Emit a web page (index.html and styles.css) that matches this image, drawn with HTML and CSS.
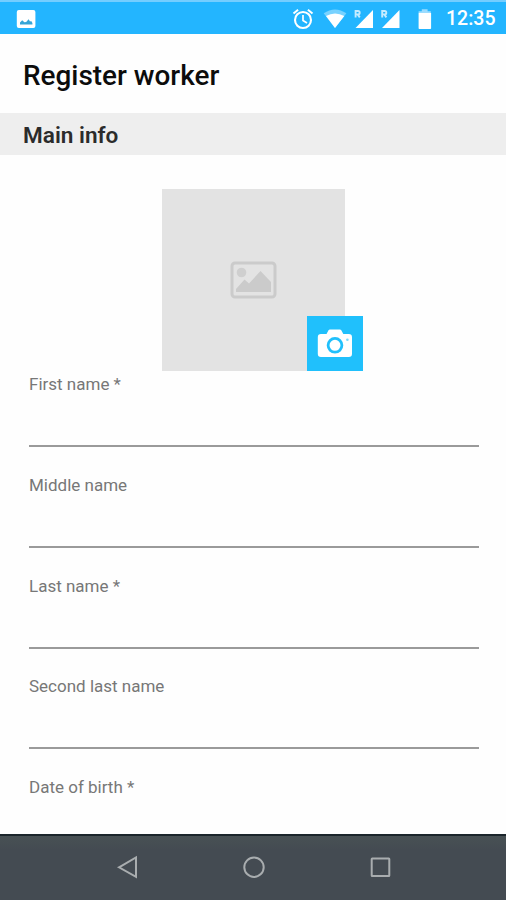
FILE: index.html
```html
<!DOCTYPE html>
<html lang="en">
<head>
<meta charset="utf-8">
<title>Register worker</title>
<link rel="stylesheet" href="styles.css">
</head>
<body>
<div class="screen">
  <header class="status">
    <svg class="status-photo" width="20" height="20" viewBox="16 8 20 20"><rect x="16.8" y="9" width="18.6" height="18" rx="2" fill="#fff"/><path d="M20 23.4v-1.8l2.2-2.4 2.2 2 1.800-.2 2.400-2.800 1.400 2.200 1.200-.4 1.200 2v1.400z" fill="#35a5d8"/></svg>
    <div class="status-icons">
      <svg width="22" height="22" viewBox="292 7 22 22" fill="none" stroke="#fff"><circle cx="303" cy="19" r="8" stroke-width="2.1"/><path d="M303 14v5.5l4 2.4" stroke-width="1.7"/><path d="M293.5 12.5l4.6-3.8M312.5 12.5l-4.6-3.8" stroke-width="2"/></svg>
      <svg width="24" height="22" viewBox="323 7 24 22"><path d="M323.7 12.3Q335 4.500 346.400 12.300L335 27z" fill="#78d2ff"/><path d="M326 15Q335 9.800 344.300 15L335 27z" fill="#fff"/></svg>
      <svg width="21" height="22" viewBox="353 7 21 22"><path d="M373 9v18h-17.500z" fill="#fff"/><path d="M355.600 16.500V10h2.400a1.700 1.700 0 0 1 0 3.400h-2.400m2 0l2.200 3" fill="none" stroke="#c4ebff" stroke-width="1.900"/></svg>
      <svg width="21" height="22" viewBox="380 7 21 22"><path d="M399.500 9v18h-17.500z" fill="#fff"/><path d="M382.200 16.500V10h2.400a1.700 1.700 0 0 1 0 3.400h-2.400m2 0l2.200 3" fill="none" stroke="#c4ebff" stroke-width="1.900"/></svg>
      <svg width="14" height="22" viewBox="418 7 14 22"><path d="M418.600 12V10.300h3.200V8.300h5.800v2h3.200V12z" fill="#9bdcff"/><path d="M418.600 12h12.500v15.200q0 .8-.8.800h-10.900q-.8 0-.8-.8z" fill="#fff"/></svg>
    </div>
    <span class="clock">12:35</span>
  </header>
  <h1 class="title">Register worker</h1>
  <h2 class="section">Main info</h2>
  <main class="form">
    <div class="photo">
      <svg width="48" height="40" viewBox="230 260 48 40"><rect x="232" y="263" width="43" height="34" rx="3" fill="none" stroke="#cbcbcb" stroke-width="3"/><circle cx="241.500" cy="272.500" r="4.800" fill="#cfcfcf"/><path d="M236 292v-3l8.500-9.500 4.500 4L260.500 271l10.500 11v10z" fill="#cbcbcb"/></svg>
      <button class="camera" aria-label="Take photo">
        <svg width="36" height="30" viewBox="317 329 36 30"><path d="M321 334h5.500l2-3.700q.5-.8 1.400-.8h10q.9 0 1.400.8l2 3.700h5.500q3.200 0 3.200 3.200v16.600q0 3.200-3.200 3.200h-27.800q-3.200 0-3.200-3.200v-16.600q0-3.200 3.200-3.200z" fill="#fff"/><circle cx="335" cy="345.300" r="6.900" fill="none" stroke="#20c0fc" stroke-width="2.800"/><circle cx="347.400" cy="339.800" r="1.300" fill="#7bdafd"/></svg>
      </button>
    </div>
    <label class="field"><span class="label">First name *</span></label>
    <label class="field"><span class="label">Middle name</span></label>
    <label class="field"><span class="label">Last name *</span></label>
    <label class="field"><span class="label">Second last name</span></label>
    <label class="field"><span class="label">Date of birth *</span></label>
  </main>
  <nav class="navbar">
    <svg width="22" height="24" viewBox="116 855 22 24"><path d="M119 867.300l17-9.800v19.400z"/></svg>
    <svg width="24" height="24" viewBox="242 855 24 24"><circle cx="254" cy="867.200" r="9.700"/></svg>
    <svg width="22" height="24" viewBox="370 855 22 24"><rect x="371.700" y="858.500" width="17.600" height="17.600" rx=".5"/></svg>
  </nav>
</div>
</body>
</html>
```
FILE: styles.css
```css
* { box-sizing: border-box; }
body { margin: 0; font-family: Roboto, "Liberation Sans", sans-serif; background: #fefefe; }
.screen { width: 506px; height: 900px; display: flex; flex-direction: column; overflow: hidden; }
.status { height: 34px; flex: none; display: flex; align-items: center; padding: 2px 10px 0 16px; background: #23b5ff; border-top: 2px solid #74cdff; }
.status-photo { display: block; }
.status-icons { display: flex; margin-left: 256px; }
.status-icons svg { display: block; flex: none; }
.status-icons svg:nth-child(2) { margin-left: 9px; }
.status-icons svg:nth-child(3) { margin-left: 6px; }
.status-icons svg:nth-child(4) { margin-left: 6px; }
.status-icons svg:nth-child(5) { margin-left: 17px; }
.clock { margin-left: 14px; color: #fff; font-size: 19.500px; font-weight: 500; line-height: 24px; white-space: nowrap; }
.title { flex: none; height: 79px; margin: 0; padding: 1px 23px 0; font-size: 27.900px; font-weight: 500; line-height: 82px; color: #0c0c0c; }
.section { flex: none; height: 42px; margin: 0; padding-left: 23px; font-size: 22.600px; font-weight: 600; line-height: 45px; color: #2b2b2b; background: #eee; }
.form { flex: 1; min-height: 0; overflow: hidden; padding: 34px 27px 0 29px; }
.photo { position: relative; width: 183px; height: 182.400px; margin-left: 133px; display: flex; align-items: center; justify-content: center; background: #e3e3e3; }
.camera { position: absolute; right: -18px; bottom: 0; width: 56px; height: 55.500px; border: 0; padding: 0; display: flex; align-items: center; justify-content: center; background: #20c0fc; }
.field { display: block; height: 76px; margin-bottom: 24.700px; border-bottom: 2px solid #9a9a9a; }
.label { display: block; padding-top: 3px; font-size: 17px; line-height: 20px; color: #777; }
.navbar { height: 66px; flex: none; display: flex; justify-content: center; align-items: center; gap: 104px; padding: 0 0 3px 2px; border-top: 2px solid #1b252b; background: linear-gradient(#485154, #444b52 14px); }
.navbar svg { display: block; fill: none; stroke: #a9adaf; stroke-width: 2; }
```
